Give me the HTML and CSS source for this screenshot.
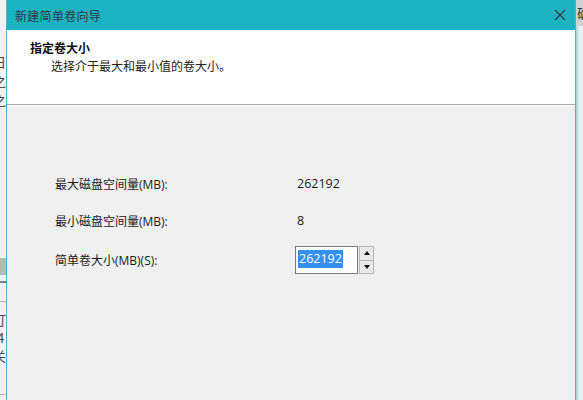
FILE: index.html
```html
<!DOCTYPE html>
<html lang="zh-CN">
<head>
<meta charset="utf-8">
<title>新建简单卷向导</title>
<link rel="stylesheet" href="styles.css">
</head>
<body>
<div class="screen">
  <div class="bg-left">
    <div class="frag-top">
      <span class="frag f-a">日</span>
      <span class="frag f-b">之</span>
      <span class="frag f-c">之</span>
    </div>
    <div class="scroll-block"></div>
    <div class="line-dark"></div>
    <div class="line-gray"></div>
    <div class="frag-bottom">
      <span class="frag">打</span>
      <span class="frag num">4</span>
      <span class="frag">关</span>
    </div>
    <div class="line-bottom"></div>
  </div>

  <div class="dialog">
    <div class="titlebar">
      <span class="title">新建简单卷向导</span>
      <svg class="close" width="12" height="12" viewBox="0 0 12 12" aria-hidden="true">
        <path d="M1 1 L11 11 M11 1 L1 11" stroke="#2f3a3c" stroke-width="1.2" fill="none"/>
      </svg>
    </div>
    <div class="header">
      <div class="h-title">指定卷大小</div>
      <div class="h-sub">选择介于最大和最小值的卷大小。</div>
    </div>
    <div class="body">
      <div class="form">
        <div class="row">
          <div class="label">最大磁盘空间量(MB):</div>
          <div class="value">262192</div>
        </div>
        <div class="row">
          <div class="label">最小磁盘空间量(MB):</div>
          <div class="value">8</div>
        </div>
        <div class="row row-input">
          <div class="label">简单卷大小(MB)(S):</div>
          <div class="spin">
            <div class="input"><span class="sel">262192</span></div>
            <div class="spin-btns">
              <div class="spin-btn"><span class="tri-up"></span></div>
              <div class="spin-btn"><span class="tri-down"></span></div>
            </div>
          </div>
        </div>
      </div>
    </div>
  </div>

  <div class="bg-right">
    <div class="rt-top"><span class="frag">确</span></div>
    <div class="rt-rest"></div>
  </div>
</div>
</body>
</html>
```

FILE: styles.css
```css
* { box-sizing: border-box; }

html, body {
  margin: 0;
  padding: 0;
  background: #f4f2f4;
  font-family: "Open Sans", "Noto Sans CJK SC", sans-serif;
  font-size: 12px;
  color: #1a1a1a;
}

.screen {
  display: flex;
  width: 583px;
  height: 400px;
  overflow: hidden;
}

/* background window fragment on the left */
.bg-left {
  width: 6px;
  flex: none;
  display: flex;
  flex-direction: column;
  overflow: hidden;
  background: #f3f1f3;
  font-family: "Noto Sans CJK SC", sans-serif;
  color: #444;
}
.frag-top {
  display: flex;
  flex-direction: column;
  padding-top: 54px;
  gap: 3px;
}
.frag {
  display: block;
  margin-left: -7px;
  font-size: 13px;
  line-height: 16px;
  height: 16px;
  white-space: nowrap;
}
.frag.num { margin-left: -3px; }
.scroll-block {
  margin-top: 150px;
  height: 17px;
  background: #b9b9b9;
}
.line-dark {
  margin-top: 6px;
  height: 2px;
  background: #7a7a7a;
}
.line-gray {
  margin-top: 18px;
  height: 1px;
  background: #b0b0b0;
}
.frag-bottom {
  display: flex;
  flex-direction: column;
  padding-top: 10px;
  gap: 2px;
}
.line-bottom {
  margin-top: 30px;
  height: 1px;
  background: #bbb;
}

/* dialog */
.dialog {
  width: 570px;
  flex: none;
  display: flex;
  flex-direction: column;
  border-left: 1px solid #4eb1bb;
  border-right: 1px solid #4eb1bb;
  background: #f0f0f0;
}

.titlebar {
  height: 30px;
  flex: none;
  display: flex;
  align-items: center;
  justify-content: space-between;
  padding: 0 8px 0 8px;
  background: #1bb3c2;
}
.title {
  font-family: "Noto Sans CJK SC", sans-serif;
  font-size: 12px;
  color: #2a3a3c;
  letter-spacing: 0.3px;
}
.close { display: block; margin-right: 1px; }

.header {
  height: 75px;
  flex: none;
  background: #ffffff;
  border-bottom: 1px solid #a8a8a8;
  padding: 9px 0 0 23px;
  font-family: "Noto Sans CJK SC", sans-serif;
}
.h-title {
  font-weight: bold;
  font-size: 12px;
  line-height: 17px;
  color: #111;
}
.h-sub {
  margin-top: 1px;
  padding-left: 21px;
  font-size: 12px;
  line-height: 17px;
  color: #222;
}

.body {
  flex: 1;
  background: #f0f0f0;
  border-top: 1px solid #ffffff;
  padding: 59px 0 0 48px;
}

.form {
  display: flex;
  flex-direction: column;
}
.row {
  display: grid;
  grid-template-columns: 242px auto;
  align-items: center;
  height: 37px;
}
.row-input { height: 42px; }
.label {
  font-family: "Open Sans", "Noto Sans CJK SC", sans-serif;
  font-size: 12px;
  color: #1a1a1a;
}
.value {
  font-family: "Open Sans", sans-serif;
  font-size: 12.5px;
  color: #1a1a1a;
  padding-left: 0;
}

.spin {
  display: flex;
  height: 28px;
  margin-left: -2px;
}
.input {
  width: 63px;
  height: 28px;
  background: #ffffff;
  border: 1px solid #7a7a7a;
  padding: 3px 0 0 2px;
}
.sel {
  display: inline-block;
  background: #3390f0;
  color: #ffffff;
  font-family: "Open Sans", sans-serif;
  font-size: 12.5px;
  line-height: 18px;
  padding: 0 1px;
}
.spin-btns {
  width: 15px;
  display: flex;
  flex-direction: column;
  margin-left: 1px;
}
.spin-btn {
  flex: 1;
  display: flex;
  align-items: center;
  justify-content: center;
  background: #e9e9e9;
  border: 1px solid #b4b4b4;
}
.spin-btn + .spin-btn { border-top: none; }
.tri-up {
  width: 0; height: 0;
  border-left: 3px solid transparent;
  border-right: 3px solid transparent;
  border-bottom: 4px solid #111;
}
.tri-down {
  width: 0; height: 0;
  border-left: 3px solid transparent;
  border-right: 3px solid transparent;
  border-top: 4px solid #111;
}

/* background window fragment on the right */
.bg-right {
  flex: 1;
  display: flex;
  flex-direction: column;
  overflow: hidden;
  background: linear-gradient(90deg, #9ccfd3 0, #d6e8e9 2px, #e9eef0 4px, #f3eef2 100%);
}
.rt-top {
  height: 26px;
  background: #cfd3d5;
  font-family: "Noto Sans CJK SC", sans-serif;
  color: #333;
  padding-top: 5px;
  padding-left: 1px;
  overflow: hidden;
}
.rt-top .frag { margin-left: 0; font-size: 13px; }
.rt-rest { flex: 1; }
```
